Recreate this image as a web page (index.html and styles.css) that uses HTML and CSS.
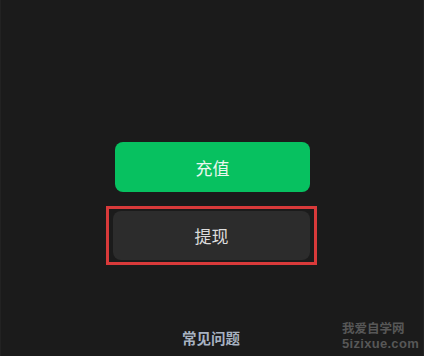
FILE: index.html
```html
<!DOCTYPE html>
<html lang="zh">
<head>
<meta charset="utf-8">
<link rel="stylesheet" href="styles.css">
</head>
<body>
<div class="page">
  <div class="actions">
    <button class="btn btn-primary">充值</button>
    <div class="highlight">
      <button class="btn btn-secondary">提现</button>
    </div>
  </div>
  <div class="faq">常见问题</div>
  <div class="watermark">
    <div class="wm-cn">我爱自学网</div>
    <div class="wm-en">5izixue.com</div>
  </div>
</div>
</body>
</html>
```

FILE: styles.css
```css
html, body {
  margin: 0;
  padding: 0;
  background: #1b1b1b;
}
.page {
  position: relative;
  width: 424px;
  height: 356px;
  box-sizing: border-box;
  border-left: 1px solid #222;
  border-right: 1px solid #222;
  font-family: "Noto Sans CJK SC", "Noto Sans", sans-serif;
  display: flex;
  flex-direction: column;
}
.actions {
  display: flex;
  flex-direction: column;
  padding-top: 142px;
  padding-left: 105px;
}
.btn {
  display: flex;
  align-items: center;
  justify-content: center;
  border: none;
  border-radius: 8px;
  font-family: "Noto Sans CJK SC", sans-serif;
  font-size: 17px;
  padding: 0;
}
.btn-primary {
  margin-left: 9px;
  width: 195px;
  height: 50px;
  background: #07c160;
  color: #eaf7ef;
}
.highlight {
  margin-top: 14px;
  width: 211px;
  height: 59px;
  box-sizing: border-box;
  border: 3px solid #d93a3a;
  padding: 2px 4px 2px 4px;
}
.btn-secondary {
  width: 197px;
  height: 49px;
  background: #2c2c2c;
  color: #dcdcdc;
}
.faq {
  margin-top: auto;
  margin-bottom: 8px;
  padding-left: 181px;
  font-size: 14.5px;
  font-weight: bold;
  color: #a7b2c1;
  line-height: 20px;
}
.watermark {
  position: absolute;
  left: 341px;
  top: 319px;
  color: #575757;
  font-weight: bold;
  white-space: nowrap;
}
.wm-cn {
  font-size: 12.5px;
  line-height: 17px;
}
.wm-en {
  font-family: "Liberation Sans", sans-serif;
  font-size: 13px;
  line-height: 15px;
  letter-spacing: 0.3px;
}
```
